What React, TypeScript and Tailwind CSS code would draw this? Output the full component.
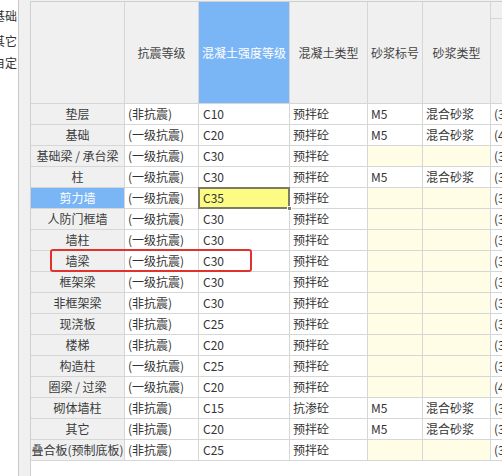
import React from "react";

const rows: string[][] = [
  ["垫层", "(非抗震)", "C10", "预拌砼", "M5", "混合砂浆", "(30)"],
  ["基础", "(一级抗震)", "C20", "预拌砼", "M5", "混合砂浆", "(40)"],
  ["基础梁 / 承台梁", "(一级抗震)", "C30", "预拌砼", "", "", "(30)"],
  ["柱", "(一级抗震)", "C30", "预拌砼", "M5", "混合砂浆", "(30)"],
  ["剪力墙", "(一级抗震)", "C35", "预拌砼", "", "", "(30)"],
  ["人防门框墙", "(一级抗震)", "C30", "预拌砼", "", "", "(30)"],
  ["墙柱", "(一级抗震)", "C30", "预拌砼", "", "", "(30)"],
  ["墙梁", "(一级抗震)", "C30", "预拌砼", "", "", "(30)"],
  ["框架梁", "(一级抗震)", "C30", "预拌砼", "", "", "(30)"],
  ["非框架梁", "(非抗震)", "C30", "预拌砼", "", "", "(30)"],
  ["现浇板", "(非抗震)", "C25", "预拌砼", "", "", "(30)"],
  ["楼梯", "(非抗震)", "C20", "预拌砼", "", "", "(30)"],
  ["构造柱", "(一级抗震)", "C25", "预拌砼", "", "", "(30)"],
  ["圈梁 / 过梁", "(一级抗震)", "C20", "预拌砼", "", "", "(40)"],
  ["砌体墙柱", "(非抗震)", "C15", "抗渗砼", "M5", "混合砂浆", "(30)"],
  ["其它", "(非抗震)", "C20", "预拌砼", "M5", "混合砂浆", "(30)"],
  ["叠合板(预制底板)", "(非抗震)", "C25", "预拌砼", "", "", "(30)"],
];

const cols = "grid grid-cols-[94px_74px_91px_78px_55px_68px_80px]";
const cell = "border-r border-b border-[#d6d6d6] h-[21px] flex items-center whitespace-nowrap overflow-hidden";

export default function App() {
  return (
    <div
      className="relative w-[502px] h-[476px] overflow-hidden bg-white flex text-[12px] text-[#333]"
      style={{ fontFamily: '"Noto Sans CJK SC", "Noto Sans", sans-serif' }}
    >
      {/* sidebar */}
      <div className="w-[18px] shrink-0 flex flex-col pt-[8px] overflow-hidden">
        <div className="flex justify-end whitespace-nowrap leading-[16px] pr-[1px]">
          <span className="shrink-0">基础</span>
        </div>
        <div className="flex justify-end whitespace-nowrap leading-[16px] pr-[1px] mt-[9px]">
          <span className="shrink-0">其它</span>
        </div>
        <div className="flex justify-end whitespace-nowrap leading-[16px] pr-[1px] mt-[6px]">
          <span className="shrink-0">自定</span>
        </div>
      </div>
      {/* gutter */}
      <div className="w-[12px] shrink-0 border-l border-[#c8c8c8] bg-[#f0f0f0]" />
      {/* table area */}
      <div className="flex-1 min-w-0 pt-[1px] bg-[#f0f0f0]">
        <div className="h-full bg-white border-l border-t border-[#cfcfcf] w-max min-w-full">
          {/* header */}
          <div className={cols}>
            <div className="h-[102px] border-r border-b border-[#d6d6d6] bg-[#f0f0f0]" />
            <div className="h-[102px] border-r border-b border-[#d6d6d6] bg-[#f0f0f0] flex items-center justify-center text-[#444]">抗震等级</div>
            <div className="h-[102px] border-r border-b border-[#d6d6d6] bg-[#7ab6f6] flex items-center justify-center text-white whitespace-nowrap">混凝土强度等级</div>
            <div className="h-[102px] border-r border-b border-[#d6d6d6] bg-[#f0f0f0] flex items-center justify-center text-[#444]">混凝土类型</div>
            <div className="h-[102px] border-r border-b border-[#d6d6d6] bg-[#f0f0f0] flex items-center justify-center text-[#444] whitespace-nowrap">砂浆标号</div>
            <div className="h-[102px] border-r border-b border-[#d6d6d6] bg-[#f0f0f0] flex items-center justify-center text-[#444] whitespace-nowrap">砂浆类型</div>
            <div className="h-[102px] border-r border-b border-[#d6d6d6] bg-[#f0f0f0] flex flex-col">
              <div className="h-[17px] border-b border-[#d6d6d6]" />
            </div>
          </div>
          {/* body */}
          {rows.map((r, i) => {
            const sel = r[0] === "剪力墙";
            const emptyMortar = r[4] === "";
            return (
              <div key={i} className={cols}>
                <div className={`${cell} justify-center ${sel ? "bg-[#7ab6f6] text-white" : "bg-[#f0f0f0] text-[#3a3a3a]"}`}>{r[0]}</div>
                <div className={`${cell} pl-[3px]`}>{r[1]}</div>
                {sel ? (
                  <div className={`${cell} relative !overflow-visible`}>
                    <div className="absolute -left-[1px] -top-[1px] w-[92px] h-[22px] border-2 border-[#7c7a62] bg-[#fcfb84] flex items-center pl-[3px]">
                      {r[2]}
                    </div>
                    <div className="absolute -right-[3px] -bottom-[3px] w-[5px] h-[5px] bg-[#7c7a70] border border-white z-10" />
                  </div>
                ) : (
                  <div className={`${cell} pl-[4px]`}>{r[2]}</div>
                )}
                <div className={`${cell} pl-[3px]`}>{r[3]}</div>
                <div className={`${cell} pl-[3px] ${emptyMortar ? "bg-[#fffde6]" : ""}`}>{r[4]}</div>
                <div className={`${cell} pl-[3px] ${emptyMortar ? "bg-[#fffde6]" : ""}`}>{r[5]}</div>
                <div className={`${cell} pl-[3px]`}>{r[6]}</div>
              </div>
            );
          })}
        </div>
      </div>
      {/* red annotation box */}
      <div className="absolute left-[50px] top-[249px] w-[202px] h-[23px] border-2 border-[#e2322d] rounded-[3px] pointer-events-none" />
    </div>
  );
}
